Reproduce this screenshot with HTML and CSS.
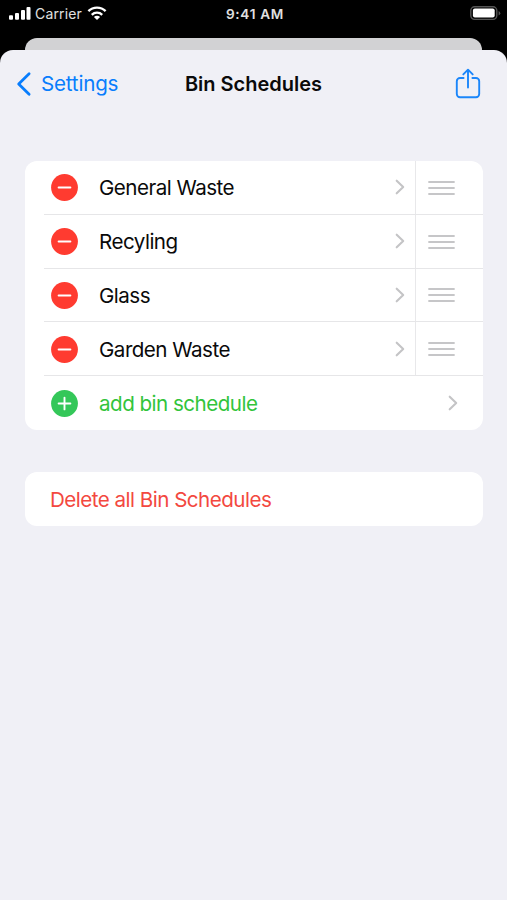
FILE: index.html
```html
<!DOCTYPE html>
<html lang="en">
<head>
<meta charset="utf-8">
<title>Bin Schedules</title>
<link rel="stylesheet" href="styles.css">
</head>
<body>
<svg class="defs" aria-hidden="true">
  <symbol id="remove" viewBox="0 0 27 27"><circle cx="13.5" cy="13.5" r="13.4" fill="#ff3b30"/><path d="M7.6 13.5h11.8" stroke="#fff" stroke-width="1.9" stroke-linecap="round"/></symbol>
  <symbol id="add" viewBox="0 0 27 27"><circle cx="13.5" cy="13.5" r="13.4" fill="#34c759"/><path d="M7.6 13.5h11.800M13.500 7.600v11.800" stroke="#fff" stroke-width="1.9" stroke-linecap="round"/></symbol>
  <symbol id="chevron" viewBox="0 0 10 16"><path d="M1.700 1.700L8.200 8l-6.500 6.300" fill="none" stroke="#c4c4c6" stroke-width="2.1" stroke-linecap="round" stroke-linejoin="round"/></symbol>
  <symbol id="grip" viewBox="0 0 28 16"><path d="M1 2h25M1 8h25M1 14h25" stroke="#c6c6c8" stroke-width="1.8" stroke-linecap="round"/></symbol>
</svg>
<header class="status">
  <div class="network">
    <svg width="22" height="14" viewBox="0 0 22 14" fill="#fff"><rect x="0" y="9.300" width="4" height="4.400" rx="1"/><rect x="6" y="7" width="4" height="6.700" rx="1"/><rect x="12" y="4" width="4" height="9.700" rx="1"/><rect x="17.500" y="1" width="4" height="12.700" rx="1"/></svg>
    <span class="carrier">Carrier</span>
    <svg width="20" height="15" viewBox="0 0 20 15" fill="none" stroke="#fff" stroke-width="2.400"><path d="M1.400 5.200a12.200 12.200 0 0 1 17.200 0M4.800 8.800a7.400 7.400 0 0 1 10.400 0"/><path d="M10 14l-3.100-3a4.400 4.400 0 0 1 6.200 0z" fill="#fff" stroke="none"/></svg>
  </div>
  <span class="clock">9:41 AM</span>
  <svg class="battery" width="31" height="15" viewBox="0 0 31 15"><rect x=".8" y=".8" width="26" height="12.600" rx="3.800" fill="none" stroke="#555" stroke-width="1.400"/><rect x="2.900" y="2.600" width="21.800" height="9" rx="2" fill="#fff"/><path d="M28.600 5v4.400q1.700-.8 1.700-2.200t-1.700-2.200" fill="#555"/></svg>
</header>
<div class="backsheet"></div>
<main class="sheet">
  <nav class="bar">
    <div class="back">
      <svg width="16" height="26" viewBox="0 0 16 26"><path d="M13.100 2.800L2.700 13l10.400 10.200" fill="none" stroke="#087dfd" stroke-width="2.800" stroke-linecap="round" stroke-linejoin="round"/></svg>
      <span class="back-label">Settings</span>
    </div>
    <h1><span class="title">Bin Schedules</span></h1>
    <svg class="share" width="26" height="32" viewBox="0 0 26 32" fill="none" stroke="#1b86fa" stroke-width="1.900" stroke-linecap="round" stroke-linejoin="round"><path d="M8.600 10H5a3.200 3.200 0 0 0-3.200 3.200V26A3.200 3.200 0 0 0 5 29.200h16a3.200 3.200 0 0 0 3.200-3.200V13.200A3.200 3.200 0 0 0 21 10h-3.600M13 19.500V2M8.300 6.400L13 1.700l4.700 4.700"/></svg>
  </nav>
  <section class="card">
    <div class="row"><svg class="badge"><use href="#remove"/></svg><div class="cell"><span class="name">General Waste</span><svg class="chev"><use href="#chevron"/></svg><div class="handle"><svg class="grip"><use href="#grip"/></svg></div></div></div>
    <div class="row"><svg class="badge"><use href="#remove"/></svg><div class="cell"><span class="name">Recyling</span><svg class="chev"><use href="#chevron"/></svg><div class="handle"><svg class="grip"><use href="#grip"/></svg></div></div></div>
    <div class="row"><svg class="badge"><use href="#remove"/></svg><div class="cell"><span class="name">Glass</span><svg class="chev"><use href="#chevron"/></svg><div class="handle"><svg class="grip"><use href="#grip"/></svg></div></div></div>
    <div class="row"><svg class="badge"><use href="#remove"/></svg><div class="cell"><span class="name">Garden Waste</span><svg class="chev"><use href="#chevron"/></svg><div class="handle"><svg class="grip"><use href="#grip"/></svg></div></div></div>
    <div class="row last"><svg class="badge"><use href="#add"/></svg><div class="cell"><span class="name new">add bin schedule</span><svg class="chev"><use href="#chevron"/></svg></div></div>
  </section>
  <section class="card delete"><span class="name">Delete all Bin Schedules</span></section>
</main>
</body>
</html>
```
FILE: styles.css
```css
* { box-sizing: border-box; }
body {
  margin: 0;
  height: 900px;
  overflow: hidden;
  display: flex;
  flex-direction: column;
  background: #000;
  color: #0a0a0a;
  font: 20.6px/26px Inter, "Liberation Sans", sans-serif;
}
svg { display: block; flex: none; }
span { white-space: nowrap; }
.defs { position: absolute; width: 0; height: 0; }
.status {
  height: 38px;
  flex: none;
  display: grid;
  grid-template-columns: 1fr auto 1fr;
  align-items: start;
  padding: 6px 6px 0 9px;
  color: #e0e0e0;
  font-size: 14px;
  line-height: 16px;
}
.network { display: flex; gap: 4px; }
.carrier { width: 48px; letter-spacing: 0.15px; }
.clock { font-weight: 600; font-size: 13.6px; letter-spacing: 0.7px; }
.battery { justify-self: end; }
.backsheet {
  flex: none;
  height: 25px;
  margin: 0 25px -13px;
  border-radius: 12px 12px 0 0;
  background: #d2d2d4;
}
.sheet {
  flex: 1;
  border-radius: 13px 13px 0 0;
  background: #f0f0f6;
}
.bar {
  height: 69px;
  display: grid;
  grid-template-columns: 1fr auto 1fr;
  align-items: center;
  padding: 0 26px 2px 16px;
}
.back { display: flex; align-items: center; gap: 9px; color: #087dfd; letter-spacing: -0.2px; }
h1 { margin: 0; padding-left: 10px; font-size: 20px; line-height: 26px; font-weight: 600; }
.share { justify-self: end; }
.card {
  margin: 42px 24px 0 25px;
  border-radius: 12px;
  background: #fff;
  overflow: hidden;
}
.row { display: flex; align-items: center; height: 53.8px; padding-left: 19px; }
.badge { width: 27px; height: 27px; margin: 0 -34px 0 7px; }
.cell {
  flex: 1;
  height: 100%;
  display: flex;
  align-items: center;
  padding-left: 55px;
  border-bottom: 1px solid #e6e6e8;
}
.last .cell { border: 0; padding-right: 25px; }
.name { letter-spacing: -0.52px; padding-top: 2px; }
.chev { width: 10px; height: 16px; margin-left: auto; }
.handle {
  width: 68px;
  height: 100%;
  margin-left: 10px;
  padding: 1px 0 0 12px;
  border-left: 1px solid #e8e8ea;
  display: flex;
  align-items: center;
}
.grip { width: 28px; height: 16px; }
.new { color: #32c43b; }
.delete { height: 54px; display: flex; align-items: center; padding-left: 25px; color: #f34840; }
```
